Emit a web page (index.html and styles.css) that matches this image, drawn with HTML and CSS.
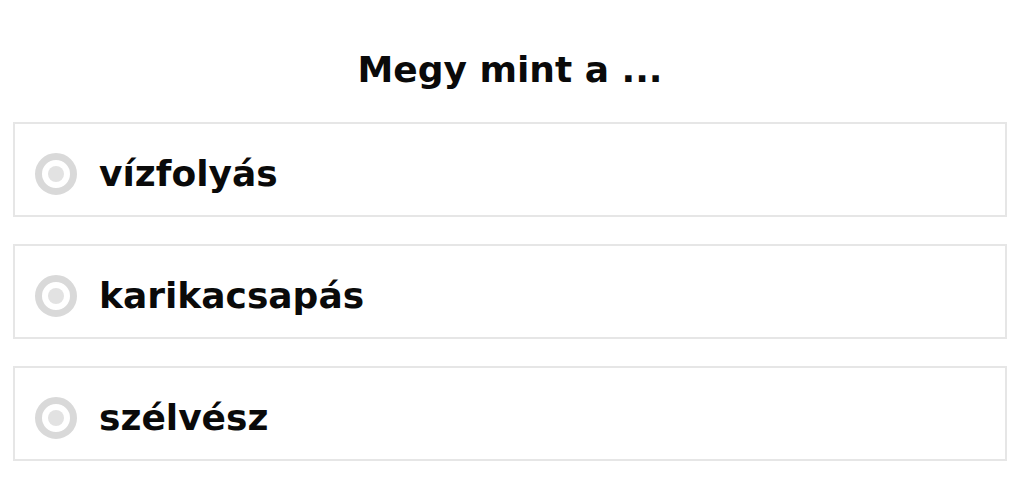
FILE: index.html
```html
<!DOCTYPE html>
<html lang="hu">
<head>
    <meta charset="UTF-8">
    <meta name="viewport" content="width=device-width, initial-scale=1.0">
    <title>Kvíz</title>
    <link rel="stylesheet" href="styles.css">
</head>
<body>
    <div class="quiz">
        <h1 class="question">Megy mint a ...</h1>

        <!-- Answers -->
        <div class="answers">
            <label class="answer">
                <input type="radio" name="answer" value="vizfolyas">
                <span class="answer-text">vízfolyás</span>
            </label>
            <label class="answer">
                <input type="radio" name="answer" value="karikacsapas">
                <span class="answer-text">karikacsapás</span>
            </label>
            <label class="answer">
                <input type="radio" name="answer" value="szelvesz">
                <span class="answer-text">szélvész</span>
            </label>
        </div>
    </div>
</body>
</html>
```

FILE: styles.css
```css
* {
    margin: 0;
    padding: 0;
    box-sizing: border-box;
}

body {
    font-family: "DejaVu Sans", "Noto Sans", sans-serif;
    background-color: #ffffff;
    color: #0a0a0a;
}

.quiz {
    padding: 0 17px 0 13px;
}

.question {
    font-size: 36px;
    font-weight: 700;
    line-height: 44px;
    text-align: center;
    padding-top: 48px;
    margin-bottom: 30px;
}

.answers {
    display: flex;
    flex-direction: column;
    gap: 27px;
}

.answer {
    display: flex;
    align-items: center;
    gap: 22px;
    height: 95px;
    padding: 9px 20px 0 20px;
    border: 2px solid #e6e6e6;
    cursor: pointer;
}

.answer input {
    appearance: none;
    -webkit-appearance: none;
    width: 42px;
    height: 42px;
    border: 7px solid #d9d9d9;
    border-radius: 50%;
    display: flex;
    align-items: center;
    justify-content: center;
    flex-shrink: 0;
    margin: 0;
}

.answer input::after {
    content: "";
    width: 16px;
    height: 16px;
    border-radius: 50%;
    background-color: #e2e2e2;
}

.answer input:checked::after {
    background-color: #0a0a0a;
}

.answer-text {
    font-size: 36px;
    font-weight: 700;
    line-height: 40px;
}
```
